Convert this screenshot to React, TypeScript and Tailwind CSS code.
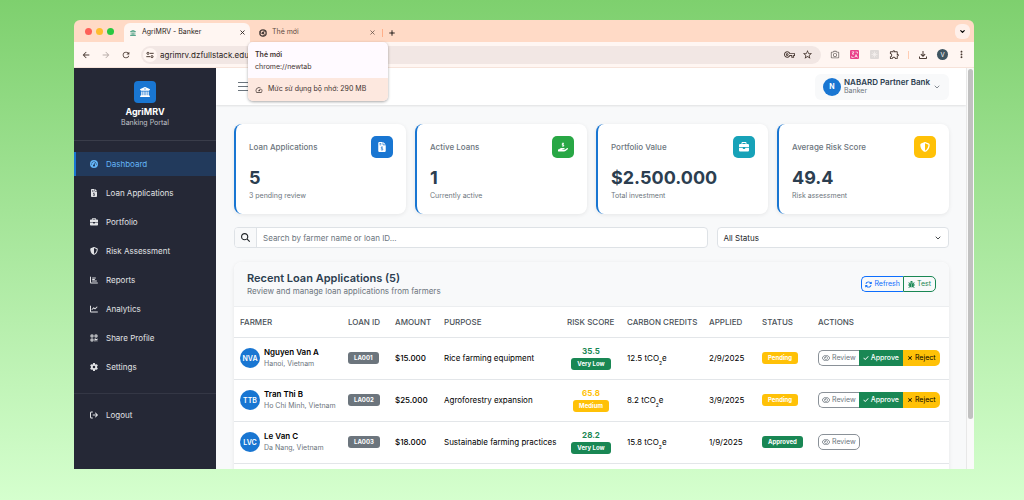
import { useState } from "react";
import type { ReactNode } from "react";
import type { IconType } from "react-icons";
import {
  FaArrowRightFromBracket,
  FaArrowsRotate,
  FaBriefcase,
  FaBug,
  FaBuildingColumns,
  FaChartBar,
  FaChartLine,
  FaCheck,
  FaFileInvoiceDollar,
  FaGaugeHigh,
  FaGear,
  FaHandHoldingDollar,
  FaMagnifyingGlass,
  FaQrcode,
  FaRegEye,
  FaShieldHalved,
  FaXmark,
} from "react-icons/fa6";
import {
  MdArrowBack,
  MdArrowForward,
  MdMoreVert,
  MdOutlineExtension,
  MdOutlineFileDownload,
  MdOutlinePhotoCamera,
  MdOutlineSpeed,
  MdOutlineVpnKey,
  MdRefresh,
  MdStarBorder,
} from "react-icons/md";
import { ChevronDown, Plus, X } from "lucide-react";

type NavItem = { label: string; icon: IconType };

const navItems: NavItem[] = [
  { label: "Dashboard", icon: FaGaugeHigh },
  { label: "Loan Applications", icon: FaFileInvoiceDollar },
  { label: "Portfolio", icon: FaBriefcase },
  { label: "Risk Assessment", icon: FaShieldHalved },
  { label: "Reports", icon: FaChartBar },
  { label: "Analytics", icon: FaChartLine },
  { label: "Share Profile", icon: FaQrcode },
  { label: "Settings", icon: FaGear },
];

const stats = [
  { title: "Loan Applications", value: "5", note: "3 pending review", icon: FaFileInvoiceDollar, tone: "bg-[#1976d2]" },
  { title: "Active Loans", value: "1", note: "Currently active", icon: FaHandHoldingDollar, tone: "bg-[#28a745]" },
  { title: "Portfolio Value", value: "$2.500.000", note: "Total investment", icon: FaBriefcase, tone: "bg-[#17a2b8]" },
  { title: "Average Risk Score", value: "49.4", note: "Risk assessment", icon: FaShieldHalved, tone: "bg-[#ffc107]" },
];

const columns = [
  { label: "Farmer", width: "w-[108px]" },
  { label: "Loan ID", width: "w-[47px]" },
  { label: "Amount", width: "w-[49px]" },
  { label: "Purpose", width: "w-[123px]" },
  { label: "Risk Score", width: "w-[60px]" },
  { label: "Carbon Credits", width: "w-[82px]" },
  { label: "Applied", width: "w-[53px]" },
  { label: "Status", width: "w-[56px]" },
  { label: "Actions", width: "" },
];

const loans = [
  { initials: "NVA", name: "Nguyen Van A", place: "Hanoi, Vietnam", id: "LA001", amount: "$15.000", purpose: "Rice farming equipment", score: "35.5", risk: "Very Low", carbon: "12.5", applied: "2/9/2025", status: "Pending" },
  { initials: "TTB", name: "Tran Thi B", place: "Ho Chi Minh, Vietnam", id: "LA002", amount: "$25.000", purpose: "Agroforestry expansion", score: "65.8", risk: "Medium", carbon: "8.2", applied: "3/9/2025", status: "Pending" },
  { initials: "LVC", name: "Le Van C", place: "Da Nang, Vietnam", id: "LA003", amount: "$18.000", purpose: "Sustainable farming practices", score: "28.2", risk: "Very Low", carbon: "15.8", applied: "1/9/2025", status: "Approved" },
];

function BrowserTabs() {
  return (
    <div className="flex h-[22px] shrink-0 items-end bg-[#ffdac6] pl-[11px] pr-1">
      <div className="flex h-full items-center gap-1 pr-2.5">
        <span className="size-[7px] rounded-full bg-[#fe5f57]" />
        <span className="size-[7px] rounded-full bg-[#febc2e]" />
        <span className="size-[7px] rounded-full bg-[#28c840]" />
      </div>
      <div className="flex h-[19px] w-[126px] items-center rounded-t-md bg-[#fff6f2] pl-1.5 pr-1 text-[7px] text-[#2b2320]">
        <FaBuildingColumns className="size-[6px] text-[#5aa58c]" />
        <span className="ml-1.5 flex-1">AgriMRV - Banker</span>
        <button aria-label="Close tab"><X className="size-[7px]" strokeWidth={3} /></button>
      </div>
      <div className="flex h-[19px] w-[128px] items-center pl-[9px] pr-0.5 text-[7px] text-[#5d4a41]">
        <svg viewBox="0 0 24 24" className="size-2 text-[#4a3f3b]" fill="none" stroke="currentColor">
          <circle cx="12" cy="12" r="9.5" strokeWidth="4" />
          <circle cx="12" cy="12" r="4" fill="currentColor" strokeWidth="0" />
          <path d="M12 6.5h10M7.2 14.8 2.5 7M16.8 14.8 12 23" strokeWidth="2.5" />
        </svg>
        <span className="ml-[5px] flex-1">Thẻ mới</span>
        <button aria-label="Close tab"><X className="size-[7px]" strokeWidth={2.5} /></button>
      </div>
      <div className="flex h-[19px] flex-1 items-center">
        <span className="ml-1 h-2 w-px bg-[#ffae88]" />
        <button aria-label="New tab" className="ml-[5px]"><Plus className="size-2" strokeWidth={2.5} /></button>
      </div>
      <button aria-label="Search tabs" className="mb-[3px] grid size-[15px] place-items-center rounded-md bg-[#fff0ea]">
        <ChevronDown className="size-[7px]" strokeWidth={4} />
      </button>
    </div>
  );
}

function BrowserToolbar() {
  return (
    <div className="flex h-[26px] shrink-0 items-center border-b border-[#f6e3da] bg-[#fff6f2] px-[7px] text-[#4b3b34]">
      <button aria-label="Back"><MdArrowBack className="size-2.5" /></button>
      <button aria-label="Forward" className="ml-2.5 text-[#b9aeaa]"><MdArrowForward className="size-2.5" /></button>
      <button aria-label="Reload" className="ml-2.5"><MdRefresh className="size-2.5" /></button>
      <div className="ml-2.5 flex h-[18px] flex-1 items-center rounded-full bg-[#f2e7e4] pl-0.5 pr-2">
        <span className="grid size-[14px] place-items-center rounded-full bg-[#fff6f2]">
          <svg viewBox="0 0 24 24" className="size-2" fill="none" stroke="currentColor" strokeWidth="3">
            <circle cx="6" cy="7" r="3.2" />
            <path d="M12 7h11M1 17h11" />
            <circle cx="18" cy="17" r="3.2" />
          </svg>
        </span>
        <input
          aria-label="Address"
          readOnly
          value="agrimrv.dzfullstack.edu.vn"
          className="ml-[3px] min-w-0 flex-1 bg-transparent text-[8px] text-[#2b2320] outline-none"
        />
        <MdOutlineVpnKey className="size-[11px]" />
        <MdStarBorder className="ml-[7px] size-[11px]" />
      </div>
      <div className="flex items-center">
        <MdOutlinePhotoCamera className="ml-[9px] size-2.5 text-[#77706d]" />
        <svg viewBox="0 0 18 18" className="ml-2.5 size-[9px]">
          <rect width="18" height="18" rx="2" fill="#e9408a" />
          <path d="M3.5 4h5M6 3v1M4 9c2-1 3-3 3.500-5M4.500 6c1 2 2 2.500 3.500 3M11 4h4v3M3.500 12v3h4M9.500 15l2.500-6 3 6M10.500 13h3.500" stroke="#fff" strokeWidth="1.300" fill="none" />
        </svg>
        <svg viewBox="0 0 18 18" className="ml-[11px] size-[9px]">
          <rect width="18" height="18" rx="2" fill="#dfdad8" />
          <path d="M9 3v12M3 9h12M5 5l8 8M13 5l-8 8" stroke="#f8f3f1" strokeWidth="1.300" />
        </svg>
        <MdOutlineExtension className="ml-2.5 size-[11px]" />
        <span className="ml-2 h-2 w-px bg-[#ffcdb4]" />
        <MdOutlineFileDownload className="ml-2 size-3" />
        <span className="ml-2 grid size-[11px] place-items-center rounded-full bg-[#3f5561] text-[6px] leading-none text-white">V</span>
        <button aria-label="Menu" className="ml-2"><MdMoreVert className="size-[11px]" /></button>
      </div>
    </div>
  );
}

function TabTooltip() {
  return (
    <div role="tooltip" className="absolute left-[174px] top-[22px] z-10 w-[140px] overflow-hidden rounded-[5px] bg-[#fffaff] text-[7px] text-[#3f3330] shadow-[0_1px_3px_rgba(0,0,0,0.35)]">
      <div className="px-[7px] pb-[5px] pt-[7px] leading-[12px]">
        <p className="font-semibold">Thẻ mới</p>
        <p>chrome://newtab</p>
      </div>
      <div className="flex h-[23px] items-center gap-[5px] bg-[#fde8df] px-[7px]">
        <MdOutlineSpeed className="size-2" />
        <span>Mức sử dụng bộ nhớ: 290 MB</span>
      </div>
    </div>
  );
}

function NavLink({ label, icon: Icon, active }: NavItem & { active?: boolean }) {
  return (
    <a
      href="#"
      aria-current={active ? "page" : undefined}
      className={`flex h-6 items-center gap-2 border-l-2 pl-3.5 ${
        active ? "border-[#1976d2] bg-[#223a5c] text-[#64b5f6]" : "border-transparent text-[#e1e2e5]"
      }`}
    >
      <Icon className="size-2" />
      {label}
    </a>
  );
}

function Sidebar() {
  return (
    <aside className="flex w-[142px] shrink-0 flex-col bg-[#252836] text-[8px]">
      <div className="flex flex-col items-center border-b border-[#3a3d4a] pb-[13px] pt-[13px]">
        <span className="grid size-[22px] place-items-center rounded bg-[#1976d2] text-white">
          <FaBuildingColumns className="size-2.5" />
        </span>
        <h1 className="mt-[3px] text-[9px] font-bold leading-[12px] text-white">AgriMRV</h1>
        <p className="text-[7px] leading-[9px] text-[#c3c4ca]">Banking Portal</p>
      </div>
      <nav className="flex flex-col gap-[5px] pb-3.5 pt-[11px]">
        {navItems.map((item) => (
          <NavLink key={item.label} {...item} active={item.label === "Dashboard"} />
        ))}
      </nav>
      <div className="border-t border-[#343745] pt-[9px]">
        <NavLink label="Logout" icon={FaArrowRightFromBracket} />
      </div>
    </aside>
  );
}

function TopBar() {
  return (
    <header className="flex h-[37px] shrink-0 items-center justify-between bg-white pl-[22px] pr-[17px] shadow-[0_1px_2px_rgba(0,0,0,0.1)]">
      <button aria-label="Toggle sidebar" className="flex flex-col gap-[3px] text-[#6c757d]">
        <span className="h-px w-2.5 bg-current" />
        <span className="h-px w-2.5 bg-current" />
        <span className="h-px w-2.5 bg-current" />
      </button>
      <button className="flex h-[26px] items-center rounded-md bg-[#f8f9fa] px-2 text-left">
        <span className="grid size-[18px] place-items-center rounded-full bg-[#1976d2] text-[7px] font-bold leading-none text-white">N</span>
        <span className="ml-[3px]">
          <span className="block text-[8px] font-semibold leading-[9px] text-[#2c3e50]">NABARD Partner Bank</span>
          <span className="block text-[7px] leading-2 text-[#6c757d]">Banker</span>
        </span>
        <ChevronDown className="ml-[3px] size-2 text-[#6c757d]" strokeWidth={2.5} />
      </button>
    </header>
  );
}

function StatCards() {
  return (
    <section className="grid grid-cols-4 gap-[9px]">
      {stats.map(({ title, value, note, icon: Icon, tone }) => (
        <article key={title} className="h-[90px] rounded-lg border-l-2 border-[#1976d2] bg-white px-[13px] pt-3 shadow-[0_1px_4px_rgba(0,0,0,0.08)]">
          <div className="flex items-center justify-between">
            <h2 className="text-[8px] font-medium text-[#6c757d]">{title}</h2>
            <span className={`grid size-[22px] place-items-center rounded-[5px] text-white ${tone}`}>
              <Icon className="size-2.5" />
            </span>
          </div>
          <p className="mt-2 text-[18px] font-bold leading-6 text-[#2c3e50]">{value}</p>
          <p className="text-[7px] leading-3 text-[#6c757d]">{note}</p>
        </article>
      ))}
    </section>
  );
}

function Filters() {
  const [query, setQuery] = useState("");
  return (
    <div className="mt-[13px] flex gap-[9px] text-[8px] text-[#212529]">
      <div className="flex h-[21px] flex-[465] overflow-hidden rounded border border-[#dee2e6] bg-white">
        <label htmlFor="search" className="grid w-[22px] place-items-center border-r border-[#dee2e6] bg-[#f8f9fa]">
          <FaMagnifyingGlass className="size-[9px]" aria-label="Search" />
        </label>
        <input
          id="search"
          value={query}
          onChange={(e) => setQuery(e.target.value)}
          placeholder="Search by farmer name or loan ID..."
          className="min-w-0 flex-1 px-1.5 outline-none placeholder:text-[#6c757d]"
        />
      </div>
      <div className="relative flex h-[21px] flex-[228]">
        <select aria-label="Status" className="w-full appearance-none rounded border border-[#dee2e6] bg-white px-[5px]">
          <option>All Status</option>
          <option>Pending</option>
          <option>Approved</option>
        </select>
        <ChevronDown className="pointer-events-none absolute right-[7px] top-[7px] size-2" strokeWidth={2.5} />
      </div>
    </div>
  );
}

function Badge({ tone, children }: { tone: string; children: ReactNode }) {
  return <span className={`inline-block rounded-[3px] px-1.5 align-middle text-[6px] font-bold leading-[12px] text-white ${tone}`}>{children}</span>;
}

function LoanTable() {
  return (
    <section className="mt-3.5 overflow-hidden rounded-lg bg-white shadow-[0_1px_4px_rgba(0,0,0,0.08)]">
      <div className="flex h-[45px] items-center justify-between border-b border-[#eceef0] bg-[#f8f9fa] px-[13px]">
        <div>
          <h2 className="text-[11px] font-semibold leading-[13px] text-[#2c3e50]">Recent Loan Applications (5)</h2>
          <p className="text-[8px] leading-3 text-[#6c757d]">Review and manage loan applications from farmers</p>
        </div>
        <div className="flex h-4 text-[7px]">
          <button className="flex items-center gap-0.5 rounded-l-[5px] border border-r-0 border-[#0d6efd] px-[3px] text-[#0d6efd]">
            <FaArrowsRotate /> Refresh
          </button>
          <button className="flex items-center gap-0.5 rounded-r-[5px] border border-[#198754] px-1 text-[#198754]">
            <FaBug /> Test
          </button>
        </div>
      </div>
      <table className="w-full table-fixed text-left text-[8px] text-black">
        <thead>
          <tr className="h-[30px] border-b border-[#e3e6e9] uppercase text-[#495057]">
            {columns.map((c) => (
              <th key={c.label} className={`whitespace-nowrap pl-1.5 font-medium ${c.width}`}>{c.label}</th>
            ))}
          </tr>
        </thead>
        <tbody>
          {loans.map((loan) => {
            const medium = loan.risk === "Medium";
            const pending = loan.status === "Pending";
            return (
              <tr key={loan.id} className="h-[42px] whitespace-nowrap border-b border-[#e3e6e9] *:px-1.5">
                <td>
                  <div className="flex items-center gap-1">
                    <span className="grid size-[20px] shrink-0 place-items-center rounded-full bg-[#1976d2] text-[7px] font-semibold leading-none text-white">{loan.initials}</span>
                    <div className="leading-3">
                      <p className="font-semibold">{loan.name}</p>
                      <p className="text-[7px] text-[#6c757d]">{loan.place}</p>
                    </div>
                  </div>
                </td>
                <td><Badge tone="bg-[#6c757d]">{loan.id}</Badge></td>
                <td className="font-medium">{loan.amount}</td>
                <td>{loan.purpose}</td>
                <td className="text-center">
                  <p className={`font-bold leading-[11px] ${medium ? "text-[#ffc107]" : "text-[#198754]"}`}>{loan.score}</p>
                  <Badge tone={medium ? "bg-[#ffc107]" : "bg-[#198754]"}>{loan.risk}</Badge>
                </td>
                <td>{loan.carbon} tCO<sub className="-bottom-1 text-[5px]">2</sub>e</td>
                <td>{loan.applied}</td>
                <td><Badge tone={pending ? "bg-[#ffc107]" : "bg-[#198754]"}>{loan.status}</Badge></td>
                <td>
                  <div className="flex h-4 text-[7px]">
                    <button className={`flex items-center gap-0.5 border border-[#8a9198] px-[3px] text-[#6c757d] ${pending ? "rounded-l-[5px] border-r-0" : "rounded-[5px]"}`}>
                      <FaRegEye className="size-2" /> Review
                    </button>
                    {pending && (
                      <>
                        <button className="flex items-center gap-0.5 bg-[#198754] px-1 font-medium text-white"><FaCheck className="size-[6px]" /> Approve</button>
                        <button className="flex items-center gap-0.5 rounded-r-[5px] bg-[#ffc107] px-1 text-black"><FaXmark className="size-[6px]" /> Reject</button>
                      </>
                    )}
                  </div>
                </td>
              </tr>
            );
          })}
        </tbody>
      </table>
      <div className="h-10" />
    </section>
  );
}

export default function App() {
  return (
    <div className="h-screen bg-linear-to-b from-[#7ed06e] to-[#d5ffce] pb-[31px] pl-[74px] pr-[50px] pt-5 font-['Inter','Noto_Sans',sans-serif]">
      <div className="relative flex h-full flex-col overflow-hidden rounded-t-md">
        <BrowserTabs />
        <BrowserToolbar />
        <TabTooltip />
        <div className="flex min-h-0 flex-1">
          <Sidebar />
          <div className="flex min-w-0 flex-1 flex-col overflow-hidden bg-[#f8f9fa]">
            <TopBar />
            <main className="min-h-0 flex-1 overflow-hidden pl-[18px] pr-[17px] pt-[19px]">
              <StatCards />
              <Filters />
              <LoanTable />
            </main>
          </div>
          <div className="w-2 shrink-0 border-l border-[#e8e8e8] bg-[#fafafa] px-px pt-px">
            <div className="h-7/8 rounded-full bg-[#c1c1c1]" />
          </div>
        </div>
      </div>
    </div>
  );
}
